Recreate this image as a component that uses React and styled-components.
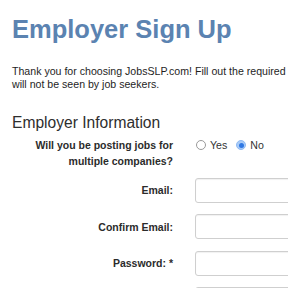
import styled, { createGlobalStyle } from "styled-components";

const GlobalStyle = createGlobalStyle`
  html, body {
    margin: 0;
    padding: 0;
    background: #fff;
    overflow: hidden;
  }
  body {
    font-family: "Liberation Sans", Arial, sans-serif;
    color: #222;
  }
`;

const Page = styled.div`
  width: 640px;
  padding: 14px 12px 0;
`;

const Title = styled.h1`
  margin: 0;
  font-size: 25.5px;
  line-height: 30px;
  font-weight: bold;
  color: #5b83b1;
`;

const Intro = styled.p`
  margin: 21px 0 0;
  font-size: 10.6px;
  line-height: 12.5px;
  color: #1e1e1e;
  white-space: nowrap;
`;

const SectionTitle = styled.h2`
  margin: 24px 0 0;
  font-size: 15.6px;
  line-height: 18px;
  font-weight: normal;
  color: #2e2e2e;
`;

const Form = styled.div`
  display: grid;
  grid-template-columns: 161px 1fr;
  column-gap: 22px;
  row-gap: 11.5px;
  margin-top: 5px;
`;

const Label = styled.label`
  font-size: 10.5px;
  line-height: 16px;
  font-weight: bold;
  color: #2b2b2b;
  text-align: right;
  align-self: ${(p) => (p.$top ? "start" : "center")};
  margin-bottom: ${(p) => (p.$top ? "-3px" : "0")};
`;

const Control = styled.div`
  display: flex;
  align-items: ${(p) => (p.$top ? "flex-start" : "center")};
`;

const RadioGroup = styled.div`
  display: flex;
  align-items: center;
  height: 16px;
  margin-left: 1px;
  gap: 9px;
`;

const RadioOption = styled.span`
  display: inline-flex;
  align-items: center;
  gap: 4px;
  font-size: 10.6px;
  color: #333;
`;

const RadioDot = styled.span`
  position: relative;
  box-sizing: border-box;
  width: 10px;
  height: 10px;
  border-radius: 50%;
  border: 1px solid ${(p) => (p.$checked ? "#8fbaf3" : "#9a9a9a")};
  background: ${(p) => (p.$checked ? "#a9cbf7" : "#fff")};

  &::after {
    content: "";
    display: ${(p) => (p.$checked ? "block" : "none")};
    position: absolute;
    left: 50%;
    top: 50%;
    width: 5px;
    height: 5px;
    margin: -2.5px 0 0 -2.5px;
    border-radius: 50%;
    background: #2f78e4;
  }
`;

const Input = styled.div`
  box-sizing: border-box;
  width: 200px;
  height: 25px;
  border: 1px solid #cfcfcf;
  border-radius: 3px;
  box-shadow: inset 0 1px 1px rgba(0, 0, 0, 0.06);
  background: #fff;
`;

const fields = ["Email:", "Confirm Email:", "Password: *", "Confirm Password: *"];

export default function App() {
  return (
    <>
      <GlobalStyle />
      <Page>
        <Title>Employer Sign Up</Title>
        <Intro>
          Thank you for choosing JobsSLP.com! Fill out the required fields below. Your contact information
          <br />
          will not be seen by job seekers.
        </Intro>
        <SectionTitle>Employer Information</SectionTitle>
        <Form>
          <Label $top>
            Will you be posting jobs for
            <br />
            multiple companies?
          </Label>
          <Control $top>
            <RadioGroup>
              <RadioOption>
                <RadioDot />
                Yes
              </RadioOption>
              <RadioOption>
                <RadioDot $checked />
                No
              </RadioOption>
            </RadioGroup>
          </Control>
          {fields.map((f) => (
            <Row key={f} label={f} />
          ))}
        </Form>
      </Page>
    </>
  );
}

function Row({ label }) {
  return (
    <>
      <Label>{label}</Label>
      <Control>
        <Input />
      </Control>
    </>
  );
}
